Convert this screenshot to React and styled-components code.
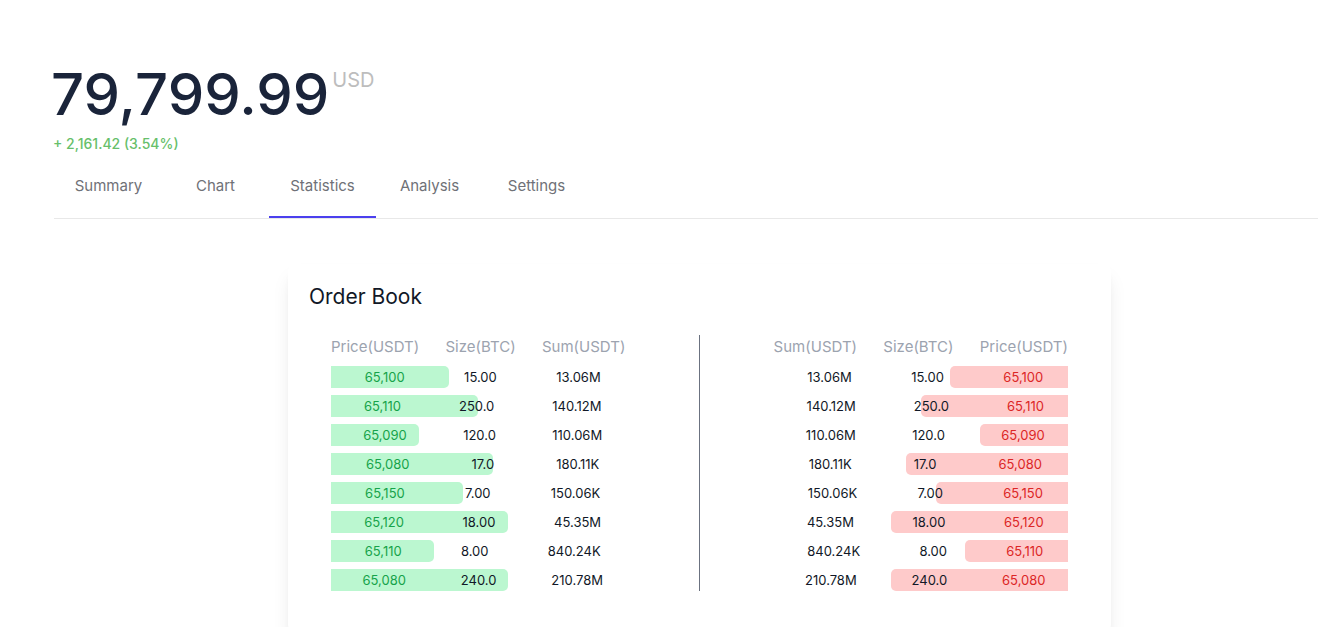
import React, { useState } from 'react';
import styled, { createGlobalStyle } from 'styled-components';

const GlobalStyle = createGlobalStyle`
  *, *::before, *::after { box-sizing: border-box; }
  body {
    margin: 0;
    background: #fff;
    color: #111827;
    font-family: Inter, "Liberation Sans", sans-serif;
  }
`;

const Page = styled.main`
  padding-top: 58px;
`;

const Header = styled.header`
  padding-left: 51px;
`;

const PriceLine = styled.div`
  display: flex;
  align-items: flex-start;
  gap: 3px;
`;

const Price = styled.h1`
  margin: 0;
  color: #1a243a;
  font-size: 58px;
  font-weight: 500;
  line-height: 72px;
`;

const Currency = styled.span`
  padding-top: 8px;
  color: #bdbdbd;
  font-size: 20px;
  line-height: 28px;
`;

const Change = styled.p`
  margin: 4px 0 0;
  padding-left: 2px;
  color: #67bf6b;
  font-size: 14px;
  font-weight: 500;
  line-height: 20px;
`;

const Tabs = styled.nav`
  display: flex;
  margin: 10px 0 0 54px;
  padding-left: 1px;
  border-bottom: 1px solid #e8e8e8;
`;

const Tab = styled.button`
  flex: 0 1 107px;
  height: 54px;
  padding: 0 0 8px;
  border: 0;
  border-bottom: 2px solid ${({ $active }) => ($active ? '#4b40ee' : 'transparent')};
  background: none;
  color: #6f7177;
  font: inherit;
  font-size: 15px;
  line-height: 20px;
  cursor: pointer;
`;

const Section = styled.section`
  display: flex;
  justify-content: center;
  padding: 45px 0 0 81px;
`;

const Card = styled.article`
  width: 100%;
  max-width: 823px;
  padding: 19px 43px 42px;
  border-radius: 8px;
  background: #fff;
  box-shadow: 0 12px 20px -4px rgba(0, 0, 0, 0.1), 0 7px 9px -5px rgba(0, 0, 0, 0.1);
`;

const Title = styled.h2`
  margin: 0 0 24px -22px;
  font-size: 21px;
  font-weight: 400;
  line-height: 28px;
`;

const Books = styled.div`
  display: flex;
`;

const Side = styled.div`
  display: flex;
  flex: 1;
  justify-content: ${({ $ask }) => ($ask ? 'flex-end' : 'flex-start')};
  border-right: ${({ $ask }) => ($ask ? '0' : '1px solid #6b7280')};
`;

const Table = styled.table`
  display: block;
  width: 80%;
`;

const Head = styled.thead`
  display: block;
`;

const HeadRow = styled.tr`
  display: flex;
  justify-content: space-between;
  padding-bottom: 7px;
`;

const HeadCell = styled.th`
  padding: 0;
  color: #9ca3af;
  font-size: 15px;
  font-weight: 400;
  line-height: 24px;
`;

const Body = styled.tbody`
  display: flex;
  flex-direction: column;
  gap: 7px;
  margin-right: -5px;
`;

const Row = styled.tr`
  position: relative;
  isolation: isolate;
  display: flex;
  justify-content: space-around;
  padding-left: 4px;
`;

const Cell = styled.td`
  padding: 0;
  color: ${({ $tone }) => $tone || '#111827'};
  font-size: 13px;
  line-height: 22px;
`;

const Track = styled.span`
  position: absolute;
  z-index: -1;
  inset: 0 5px 0 0;
  display: flex;
  justify-content: ${({ $ask }) => ($ask ? 'flex-end' : 'flex-start')};
`;

const Bar = styled.span`
  border-radius: ${({ $ask }) => ($ask ? '5px 0 0 5px' : '0 5px 5px 0')};
  background: ${({ $ask }) => ($ask ? '#fecaca' : '#bbf7d0')};
`;

const tabs = ['Summary', 'Chart', 'Statistics', 'Analysis', 'Settings'];

const orders = [
  { price: '65,100', size: '15.00', sum: '13.06M', depth: 40 },
  { price: '65,110', size: '250.0', sum: '140.12M', depth: 50 },
  { price: '65,090', size: '120.0', sum: '110.06M', depth: 30 },
  { price: '65,080', size: '17.0', sum: '180.11K', depth: 55 },
  { price: '65,150', size: '7.00', sum: '150.06K', depth: 45 },
  { price: '65,120', size: '18.00', sum: '45.35M', depth: 60 },
  { price: '65,110', size: '8.00', sum: '840.24K', depth: 35 },
  { price: '65,080', size: '240.0', sum: '210.78M', depth: 60 },
];

const labels = { price: 'Price(USDT)', size: 'Size(BTC)', sum: 'Sum(USDT)' };

function BookSide({ ask = false }) {
  const columns = ask ? ['sum', 'size', 'price'] : ['price', 'size', 'sum'];
  return (
    <Side $ask={ask}>
      <Table aria-label={ask ? 'Asks' : 'Bids'}>
        <Head>
          <HeadRow>
            {columns.map((key) => (
              <HeadCell key={key} scope="col">{labels[key]}</HeadCell>
            ))}
          </HeadRow>
        </Head>
        <Body>
          {orders.map((order, index) => (
            <Row key={index}>
              {columns.map((key) =>
                key === 'price' ? (
                  <Cell key={key} $tone={ask ? '#dc2626' : '#16a34a'}>
                    <Track $ask={ask}>
                      <Bar $ask={ask} style={{ width: `${order.depth}%` }} />
                    </Track>
                    {order.price}
                  </Cell>
                ) : (
                  <Cell key={key}>{order[key]}</Cell>
                )
              )}
            </Row>
          ))}
        </Body>
      </Table>
    </Side>
  );
}

export default function App() {
  const [active, setActive] = useState('Statistics');
  return (
    <Page>
      <GlobalStyle />
      <Header>
        <PriceLine>
          <Price>79,799.99</Price>
          <Currency>USD</Currency>
        </PriceLine>
        <Change>+ 2,161.42 (3.54%)</Change>
      </Header>
      <Tabs>
        {tabs.map((tab) => (
          <Tab key={tab} type="button" $active={tab === active} onClick={() => setActive(tab)}>
            {tab}
          </Tab>
        ))}
      </Tabs>
      <Section>
        <Card>
          <Title>Order Book</Title>
          <Books>
            <BookSide />
            <BookSide ask />
          </Books>
        </Card>
      </Section>
    </Page>
  );
}
